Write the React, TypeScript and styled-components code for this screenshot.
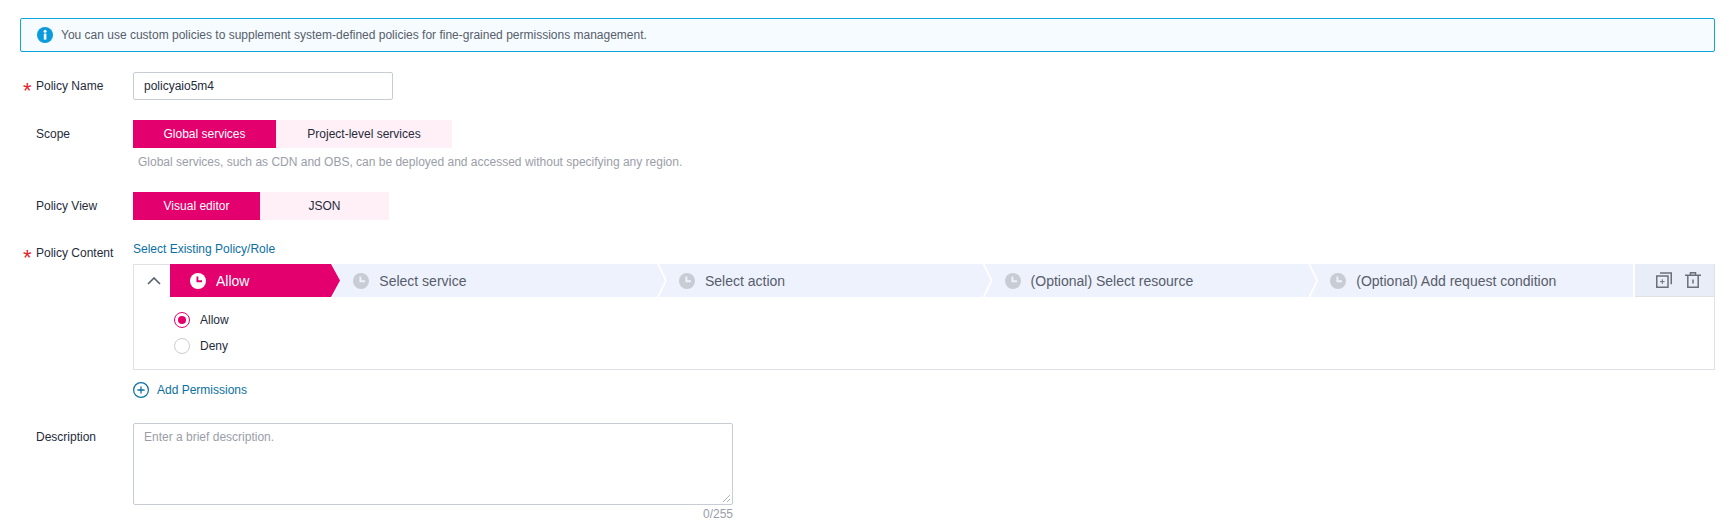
import React from "react";
import styled, { createGlobalStyle } from "styled-components";

const PINK = "#e3006e";
const LINK = "#0b6fa4";

const GlobalStyle = createGlobalStyle`
  html, body {
    margin: 0;
    padding: 0;
    background: #ffffff;
    font-family: "Liberation Sans", Arial, sans-serif;
    font-size: 12px;
    color: #252b3a;
  }
`;

const Page = styled.div`
  width: 1734px;
  height: 525px;
  overflow: hidden;
  box-sizing: border-box;
  padding: 18px 19px 0 20px;
`;

const Alert = styled.div`
  display: flex;
  align-items: center;
  gap: 8px;
  height: 34px;
  box-sizing: border-box;
  padding-left: 16px;
  margin-bottom: 20px;
  border: 1px solid #0ea5dc;
  border-radius: 2px;
  background: #f5fbfe;
  color: #575d6c;
`;

const Row = styled.div<{ $gap?: number }>`
  display: flex;
  margin-bottom: ${(p) => p.$gap ?? 0}px;
`;

const Label = styled.div<{ $top: number }>`
  position: relative;
  width: 113px;
  flex: none;
  padding: ${(p) => p.$top}px 0 0 16px;
  box-sizing: border-box;
  line-height: 16px;
  color: #252b3a;
`;

const Required = styled.span<{ $top: number }>`
  position: absolute;
  left: 3px;
  top: ${(p) => p.$top}px;
  color: #e5222e;
  font-size: 22px;
  line-height: 20px;
`;

const Content = styled.div`
  flex: 1;
  min-width: 0;
`;

const TextInput = styled.div`
  width: 260px;
  height: 28px;
  box-sizing: border-box;
  padding-left: 10px;
  border: 1px solid #c8ccd4;
  border-radius: 2px;
  line-height: 26px;
  color: #252b3a;
`;

const Tabs = styled.div`
  display: flex;
`;

const Tab = styled.div<{ $active?: boolean; $width: number }>`
  width: ${(p) => p.$width}px;
  height: 28px;
  line-height: 28px;
  text-align: center;
  background: ${(p) => (p.$active ? PINK : "#fff0f7")};
  color: ${(p) => (p.$active ? "#ffffff" : "#252b3a")};
`;

const Hint = styled.div`
  margin: 6px 0 0 5px;
  line-height: 16px;
  color: #9a9ea8;
`;

const LinkText = styled.div`
  color: ${LINK};
  line-height: 16px;
  margin-bottom: 7px;
`;

const Panel = styled.div`
  height: 106px;
  box-sizing: border-box;
  border: 1px solid #dfe1e6;
  border-top: none;
`;

const StepBar = styled.div`
  display: flex;
  height: 33px;
`;

const Toggle = styled.div`
  width: 36px;
  flex: none;
  display: flex;
  align-items: center;
  justify-content: center;
  padding-left: 3px;
  border-top: 1px solid #dfe1e6;
  box-sizing: border-box;
`;

const Steps = styled.div`
  flex: 1;
  display: grid;
  grid-template-columns: 171.3px repeat(3, 325.67px) 1fr;
  background: #eef2fc;
`;

const Step = styled.div<{ $active?: boolean }>`
  position: relative;
  display: flex;
  align-items: center;
  gap: 10px;
  font-size: 14px;
  color: ${(p) => (p.$active ? "#ffffff" : "#575d6c")};
  padding-left: ${(p) => (p.$active ? 20 : 12)}px;
  ${(p) =>
    p.$active
      ? `
    margin-right: 1.3px;
    &::before {
      content: "";
      position: absolute;
      inset: 0;
      background: ${PINK};
      clip-path: polygon(0 0, calc(100% - 9px) 0, 100% 50%, calc(100% - 9px) 100%, 0 100%);
    }
    & > * { position: relative; }
  `
      : `
    &::after {
      content: "";
      position: absolute;
      top: 0;
      right: 0;
      width: 10px;
      height: 100%;
      background: #ffffff;
      clip-path: polygon(0 0, 2px 0, 100% 50%, 2px 100%, 0 100%, calc(100% - 2px) 50%);
    }
    &:last-child::after { display: none; }
  `}
`;

const Actions = styled.div`
  width: 79px;
  flex: none;
  margin-left: 2px;
  box-sizing: border-box;
  padding-left: 21px;
  display: flex;
  align-items: center;
  gap: 13px;
  background: #e8edf8;
  border-bottom: 1px solid #dfe1e6;
  color: #6c6f78;
`;

const RadioGroup = styled.div`
  display: flex;
  flex-direction: column;
  gap: 10px;
  padding: 15px 0 0 40px;
`;

const RadioRow = styled.div`
  display: flex;
  align-items: center;
  gap: 10px;
  line-height: 16px;
  height: 16px;
`;

const RadioDot = styled.span<{ $checked?: boolean }>`
  width: 16px;
  height: 16px;
  box-sizing: border-box;
  border-radius: 50%;
  border: 1px solid ${(p) => (p.$checked ? PINK : "#c8ccd4")};
  display: flex;
  align-items: center;
  justify-content: center;
  &::after {
    content: "";
    display: ${(p) => (p.$checked ? "block" : "none")};
    width: 8px;
    height: 8px;
    border-radius: 50%;
    background: ${PINK};
  }
`;

const AddRow = styled.div`
  display: flex;
  align-items: center;
  gap: 8px;
  height: 16px;
  margin-top: 12px;
  color: ${LINK};
`;

const TextArea = styled.div`
  position: relative;
  width: 600px;
  height: 82px;
  box-sizing: border-box;
  padding: 5px 10px;
  border: 1px solid #c8ccd4;
  border-radius: 2px;
  line-height: 16px;
  color: #9a9ea8;
`;

const Grip = styled.svg`
  position: absolute;
  right: 1px;
  bottom: 1px;
`;

const Counter = styled.div`
  width: 600px;
  margin-top: 1px;
  text-align: right;
  line-height: 16px;
  color: #9a9ea8;
`;

const InfoIcon = () => (
  <svg width="16" height="16" viewBox="0 0 16 16">
    <circle cx="8" cy="8" r="8" fill="#0a9bdc" />
    <rect x="6.8" y="6.6" width="2.6" height="6" fill="#fff" />
    <circle cx="8.1" cy="4.2" r="1.5" fill="#fff" />
  </svg>
);

const ClockIcon = ({ bg, fg }: { bg: string; fg: string }) => (
  <svg width="16" height="16" viewBox="0 0 16 16">
    <circle cx="8" cy="8" r="8" fill={bg} />
    <path d="M7.4 3.4v4.9h4.6" fill="none" stroke={fg} strokeWidth="1.9" />
  </svg>
);

const Chevron = () => (
  <svg width="14" height="8" viewBox="0 0 14 8">
    <path d="M1 7l6-6 6 6" fill="none" stroke="#575d6c" strokeWidth="1.6" />
  </svg>
);

const CopyIcon = () => (
  <svg width="16" height="16" viewBox="0 0 16 16" fill="none" stroke="currentColor" strokeWidth="1.5">
    <rect x="0.75" y="4" width="11.25" height="11.25" />
    <path d="M4 1h11.25v11.25" />
    <path d="M4 9.6h4.6M6.3 7.3v4.6" strokeWidth="1" />
  </svg>
);

const TrashIcon = () => (
  <svg width="16" height="16" viewBox="0 0 16 16" fill="none" stroke="currentColor" strokeWidth="1.5">
    <path d="M0 3.2h16M5.5 3.2V0.8h5v2.4M2.8 3.2v12h10.4v-12M8 7.5v4" />
  </svg>
);

const PlusCircle = () => (
  <svg width="16" height="16" viewBox="0 0 16 16" fill="none" stroke={LINK}>
    <circle cx="8" cy="8" r="7.4" strokeWidth="1.2" />
    <path d="M4.4 8h7.2M8 4.4v7.2" strokeWidth="1.3" />
  </svg>
);

const STEPS = ["Select service", "Select action", "(Optional) Select resource", "(Optional) Add request condition"];

const App = () => {
  return (
    <Page>
      <GlobalStyle />
      <Alert>
        <InfoIcon />
        <span>You can use custom policies to supplement system-defined policies for fine-grained permissions management.</span>
      </Alert>

      <Row $gap={20}>
        <Label $top={6}>
          <Required $top={9}>*</Required>
          Policy Name
        </Label>
        <Content>
          <TextInput>policyaio5m4</TextInput>
        </Content>
      </Row>

      <Row $gap={22}>
        <Label $top={6}>Scope</Label>
        <Content>
          <Tabs>
            <Tab $active $width={143}>Global services</Tab>
            <Tab $width={176}>Project-level services</Tab>
          </Tabs>
          <Hint>Global services, such as CDN and OBS, can be deployed and accessed without specifying any region.</Hint>
        </Content>
      </Row>

      <Row $gap={21}>
        <Label $top={6}>Policy View</Label>
        <Content>
          <Tabs>
            <Tab $active $width={127}>Visual editor</Tab>
            <Tab $width={129}>JSON</Tab>
          </Tabs>
        </Content>
      </Row>

      <Row $gap={25}>
        <Label $top={4}>
          <Required $top={7}>*</Required>
          Policy Content
        </Label>
        <Content>
          <LinkText>Select Existing Policy/Role</LinkText>
          <Panel>
            <StepBar>
              <Toggle>
                <Chevron />
              </Toggle>
              <Steps>
                <Step $active>
                  <ClockIcon bg="#ffffff" fg={PINK} />
                  <span>Allow</span>
                </Step>
                {STEPS.map((s) => (
                  <Step key={s}>
                    <ClockIcon bg="#c8ccd4" fg="#eef2fc" />
                    <span>{s}</span>
                  </Step>
                ))}
              </Steps>
              <Actions>
                <CopyIcon />
                <TrashIcon />
              </Actions>
            </StepBar>
            <RadioGroup>
              <RadioRow>
                <RadioDot $checked />
                Allow
              </RadioRow>
              <RadioRow>
                <RadioDot />
                Deny
              </RadioRow>
            </RadioGroup>
          </Panel>
          <AddRow>
            <PlusCircle />
            Add Permissions
          </AddRow>
        </Content>
      </Row>

      <Row>
        <Label $top={6}>Description</Label>
        <Content>
          <TextArea>
            Enter a brief description.
            <Grip width="9" height="9" viewBox="0 0 9 9" stroke="#b0b3ba">
              <path d="M1 8l7-7M5 8l3-3" />
            </Grip>
          </TextArea>
          <Counter>0/255</Counter>
        </Content>
      </Row>
    </Page>
  );
};

export default App;
